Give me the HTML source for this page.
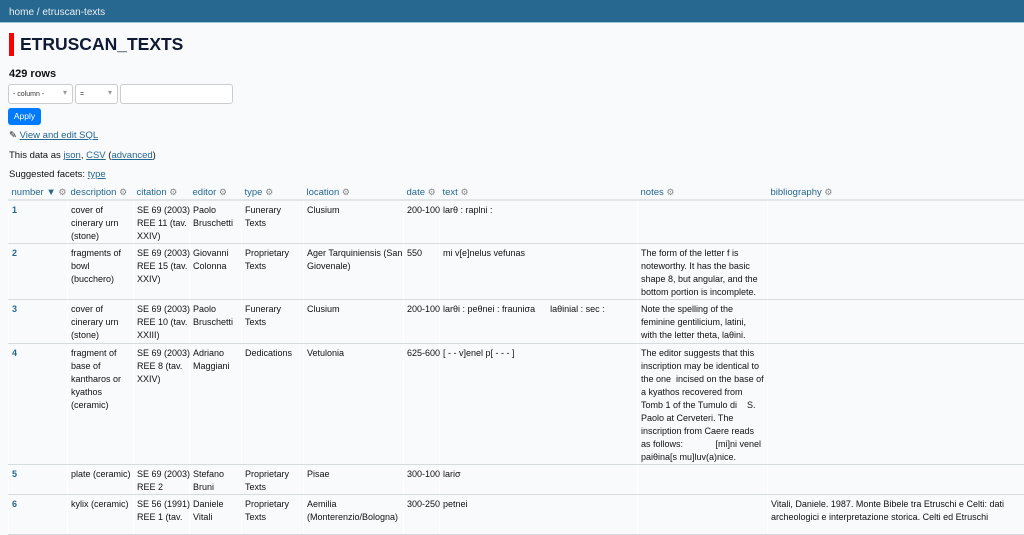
<!DOCTYPE html>
<html><head><meta charset="utf-8"><style>
*{box-sizing:border-box;margin:0;padding:0}
body{width:1024px;height:515px;overflow:hidden;background:#f8fafb;font-family:"Liberation Sans",sans-serif;color:#111;font-size:9.5px;position:relative}
.hdr{position:absolute;left:0;top:0;width:1024px;height:23px;background:#276890;border-bottom:1px solid #9ec3d6;color:#e8eef3;font-size:10px;padding:7px 9px}
.a{position:absolute}
h1{position:absolute;left:9px;top:33px;border-left:5px solid #f00;padding-left:6px;font-size:17.5px;line-height:23px;color:#111a35;font-weight:bold}
.lk{color:#276890;text-decoration:underline}
.sel{position:absolute;top:84px;height:20px;border:1px solid #ccc;background:#fff;border-radius:3px;font-size:7px;padding:6px 4px;color:#333}
.ar:after{content:"▾";position:absolute;right:5px;top:3px;color:#999;font-size:8px}
.btn{position:absolute;left:8px;top:108px;width:33px;height:17px;background:#007bff;border-radius:3px;color:#fff;font-size:8.5px;text-align:center;line-height:17px}
table{position:absolute;left:8px;top:187px;border-collapse:collapse;table-layout:fixed;width:1016px;font-size:9px}
th{font-weight:normal;color:#276890;text-align:left;height:13px;padding:0 3px;vertical-align:top;white-space:nowrap;border-bottom:2px solid #e2e6e9;font-size:9.5px}
th i{font-style:normal;color:#888;font-size:9px}
td{vertical-align:top;padding:3px 3px 0;line-height:13px;border-right:1px solid #fff;border-left:1px solid #fff;border-bottom:1px solid #d6dbde;white-space:nowrap}
td:first-child{font-weight:bold;color:#276890}
</style></head><body>
<div class="hdr">home / etruscan-texts</div>
<h1>ETRUSCAN_TEXTS</h1>
<div class="a" style="left:9px;top:68px;font-size:11px;font-weight:bold">429 rows</div>
<div class="sel ar" style="left:8px;width:65px">- column -</div>
<div class="sel ar" style="left:75px;width:43px">=</div>
<div class="sel" style="left:120px;width:113px"></div>
<div class="btn">Apply</div>
<div class="a" style="left:9px;top:130px">✎ <span class="lk">View and edit SQL</span></div>
<div class="a" style="left:9px;top:150px">This data as <span class="lk">json</span>, <span class="lk">CSV</span> (<span class="lk">advanced</span>)</div>
<div class="a" style="left:9px;top:169px">Suggested facets: <span class="lk">type</span></div>
<table>
<colgroup><col style="width:59px"><col style="width:66px"><col style="width:56px"><col style="width:52px"><col style="width:62px"><col style="width:100px"><col style="width:36px"><col style="width:198px"><col style="width:130px"><col style="width:257px"></colgroup>
<tr><th>number ▼ <i>⚙</i></th><th>description <i>⚙</i></th><th>citation <i>⚙</i></th><th>editor <i>⚙</i></th><th>type <i>⚙</i></th><th>location <i>⚙</i></th><th>date <i>⚙</i></th><th>text <i>⚙</i></th><th>notes <i>⚙</i></th><th>bibliography <i>⚙</i></th></tr>
<tr style="height:43px"><td>1</td><td>cover of<br>cinerary urn<br>(stone)</td><td>SE 69 (2003)<br>REE 11 (tav.<br>XXIV)</td><td>Paolo<br>Bruschetti</td><td>Funerary<br>Texts</td><td>Clusium</td><td>200-100</td><td>larθ : raplni :</td><td></td><td></td></tr>
<tr style="height:55px"><td>2</td><td>fragments of<br>bowl<br>(bucchero)</td><td>SE 69 (2003)<br>REE 15 (tav.<br>XXIV)</td><td>Giovanni<br>Colonna</td><td>Proprietary<br>Texts</td><td>Ager Tarquiniensis (San<br>Giovenale)</td><td>550</td><td>mi v[e]nelus vefunas</td><td>The form of the letter f is<br>noteworthy. It has the basic<br>shape 8, but angular, and the<br>bottom portion is incomplete.</td><td></td></tr>
<tr style="height:44px"><td>3</td><td>cover of<br>cinerary urn<br>(stone)</td><td>SE 69 (2003)<br>REE 10 (tav.<br>XXIII)</td><td>Paolo<br>Bruschetti</td><td>Funerary<br>Texts</td><td>Clusium</td><td>200-100</td><td>larθi : peθnei : frauniσa &nbsp; &nbsp; &nbsp;laθinial : sec :</td><td>Note the spelling of the<br>feminine gentilicium, latini,<br>with the letter theta, laθini.</td><td></td></tr>
<tr style="height:121px"><td>4</td><td>fragment of<br>base of<br>kantharos or<br>kyathos<br>(ceramic)</td><td>SE 69 (2003)<br>REE 8 (tav.<br>XXIV)</td><td>Adriano<br>Maggiani</td><td>Dedications</td><td>Vetulonia</td><td>625-600</td><td>[ - - v]enel p[ - - - ]</td><td>The editor suggests that this<br>inscription may be identical to<br>the one &nbsp;incised on the base of<br>a kyathos recovered from<br>Tomb 1 of the Tumulo di &nbsp; &nbsp;S.<br>Paolo at Cerveteri. The<br>inscription from Caere reads<br>as follows: &nbsp; &nbsp; &nbsp; &nbsp; &nbsp; &nbsp; [mi]ni venel<br>paiθina[s mu]luv(a)nice.</td><td></td></tr>
<tr style="height:30px"><td>5</td><td>plate (ceramic)</td><td>SE 69 (2003)<br>REE 2</td><td>Stefano<br>Bruni</td><td>Proprietary<br>Texts</td><td>Pisae</td><td>300-100</td><td>lariσ</td><td></td><td></td></tr>
<tr style="height:40px"><td>6</td><td>kylix (ceramic)</td><td>SE 56 (1991)<br>REE 1 (tav.</td><td>Daniele<br>Vitali</td><td>Proprietary<br>Texts</td><td>Aemilia<br>(Monterenzio/Bologna)</td><td>300-250</td><td>petnei</td><td></td><td>Vitali, Daniele. 1987. Monte Bibele tra Etruschi e Celti: dati<br>archeologici e interpretazione storica. Celti ed Etruschi</td></tr>
</table>
</body></html>
